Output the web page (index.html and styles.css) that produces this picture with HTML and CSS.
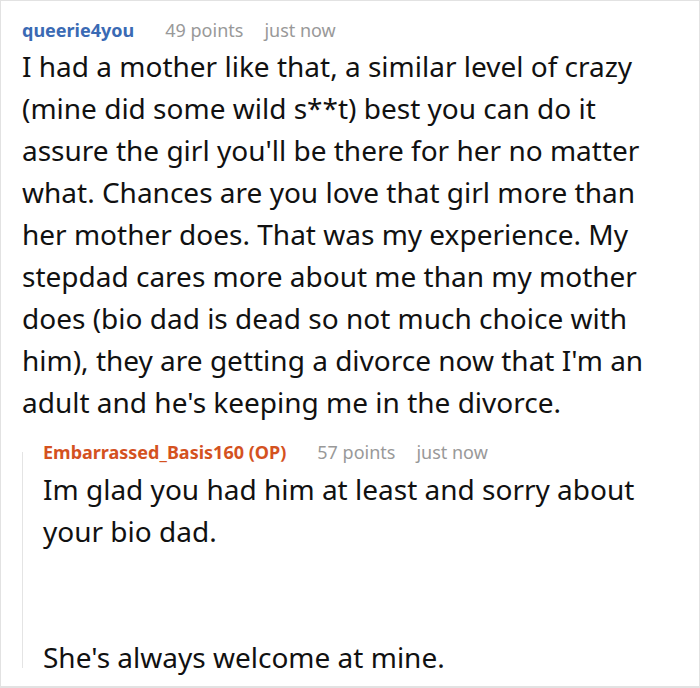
FILE: index.html
```html
<!DOCTYPE html>
<html lang="en">
<head>
<meta charset="utf-8">
<title>Comment</title>
<link rel="stylesheet" href="styles.css">
</head>
<body>
<div class="frame">
  <article class="comment">
    <header class="meta">
      <span class="author">queerie4you</span>
      <span class="points">49 points</span>
      <span class="time">just now</span>
    </header>
    <p class="text">I had a mother like that, a similar level of crazy (mine did some wild s**t) best you can do it assure the girl you'll be there for her no matter what. Chances are you love that girl more than her mother does. That was my experience. My stepdad cares more about me than my mother does (bio dad is dead so not much choice with him), they are getting a divorce now that I'm an adult and he's keeping me in the divorce.</p>
    <article class="reply">
      <header class="meta">
        <span class="author op">Embarrassed_Basis160 (OP)</span>
        <span class="points">57 points</span>
        <span class="time">just now</span>
      </header>
      <p class="text">Im glad you had him at least and sorry about your bio dad.<br><br><br>She's always welcome at mine.</p>
    </article>
  </article>
</div>
</body>
</html>
```
FILE: styles.css
```css
* { box-sizing: border-box; }
html, body { margin: 0; padding: 0; background: #fff; }
body { font-family: "Noto Sans", "Open Sans", sans-serif; color: #111; }
.frame {
  width: 700px;
  height: 688px;
  border: 1px solid #e2e2e2;
  border-bottom-width: 2px;
  overflow: hidden;
}
.comment { padding: 16px 22px 0 21px; }
.meta {
  display: flex;
  align-items: baseline;
  font-size: 18px;
  line-height: 26px;
}
.author { font-weight: 700; color: #3a6ab4; margin-right: 31px; }
.author.op { color: #d4521f; }
.points { color: #999; margin-right: 21px; }
.time { color: #999; }
.text {
  margin: 0;
  font-size: 28px;
  line-height: 42px;
  padding-top: 2px;
}
.reply {
  margin-top: 16px;
  padding-left: 21px;
  background: linear-gradient(#e4e4e4, #e4e4e4) no-repeat 0 13px / 1px calc(100% - 23px);
}
.reply .text { padding-top: 3px; }
```
